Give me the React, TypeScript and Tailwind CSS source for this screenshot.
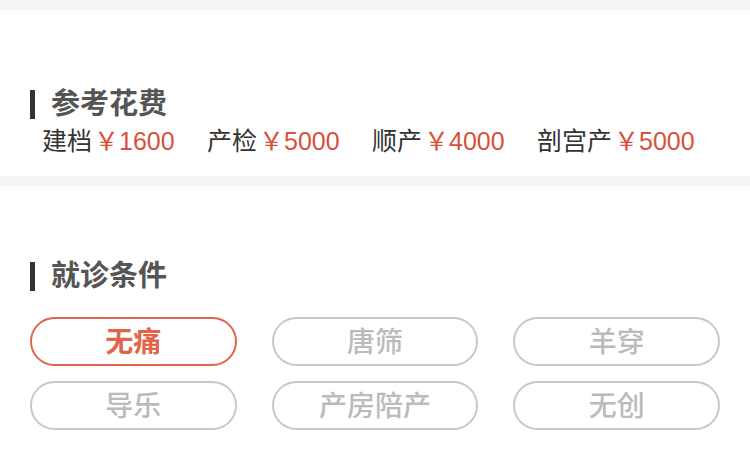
import React from 'react';

const fees = [
  { name: '建档', price: '1600' },
  { name: '产检', price: '5000' },
  { name: '顺产', price: '4000' },
  { name: '剖宫产', price: '5000' },
];

const conditions = [
  { label: '无痛', active: true },
  { label: '唐筛', active: false },
  { label: '羊穿', active: false },
  { label: '导乐', active: false },
  { label: '产房陪产', active: false },
  { label: '无创', active: false },
];

const font = { fontFamily: '"Liberation Sans", "Noto Sans CJK SC", sans-serif' };

const SectionTitle: React.FC<{ text: string }> = ({ text }) => (
  <div className="flex items-center h-[30px] pl-[30px]">
    <span className="w-[5px] h-[29px] bg-[#333333]" />
    <span className="ml-[16px] text-[29px] leading-[30px] font-bold text-[#555555]">{text}</span>
  </div>
);

export default function App() {
  return (
    <div className="w-[750px] h-[468px] overflow-hidden bg-[#f4f4f4] pt-[10px]" style={font}>
      <div className="bg-white pt-[79px] pb-[18px]">
        <SectionTitle text="参考花费" />
        <div className="flex items-center h-[34px] mt-[5px] pl-[42px] text-[25px] leading-[34px]">
          {fees.map((f) => (
            <div key={f.name} className="w-[165px] shrink-0 whitespace-nowrap">
              <span className="text-[#333333]">{f.name}</span>
              <span className="text-[#d9503b] ml-[2px]">￥{f.price}</span>
            </div>
          ))}
        </div>
      </div>
      <div className="bg-white mt-[10px] pt-[75px] h-[282px]">
        <SectionTitle text="就诊条件" />
        <div className="grid grid-cols-3 gap-x-[35px] gap-y-[15px] px-[30px] mt-[26px]">
          {conditions.map((c) => (
            <div
              key={c.label}
              className={
                c.active
                  ? 'h-[49px] pt-[2px] rounded-full border-2 border-[#e0654a] flex items-center justify-center text-[28px] font-bold text-[#e0654a]'
                  : 'h-[49px] pt-[2px] rounded-full border-2 border-[#c8c8c8] flex items-center justify-center text-[28px] font-medium text-[#bbbbbb]'
              }
            >
              {c.label}
            </div>
          ))}
        </div>
      </div>
    </div>
  );
}
